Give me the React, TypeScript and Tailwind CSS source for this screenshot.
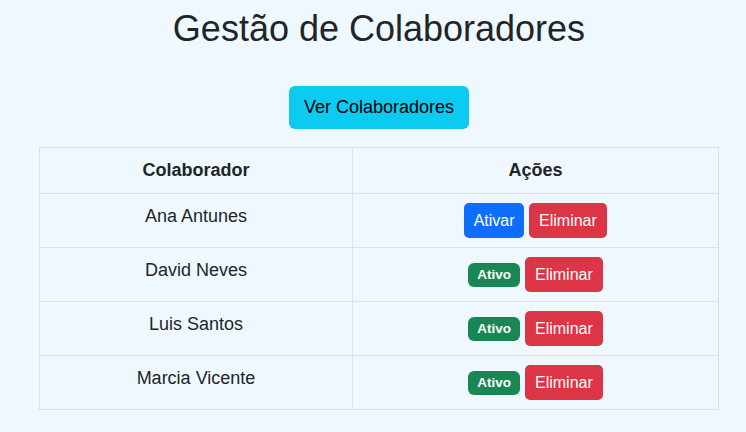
import { useState } from 'react';

interface Colaborador {
  id: number;
  nome: string;
  ativo: boolean;
}

const inicial: Colaborador[] = [
  { id: 1, nome: 'Ana Antunes', ativo: false },
  { id: 2, nome: 'David Neves', ativo: true },
  { id: 3, nome: 'Luis Santos', ativo: true },
  { id: 4, nome: 'Marcia Vicente', ativo: true },
];

export default function App() {
  const [colaboradores, setColaboradores] = useState(inicial);

  const ativar = (id: number) =>
    setColaboradores((lista) => lista.map((c) => (c.id === id ? { ...c, ativo: true } : c)));

  const eliminar = (id: number) =>
    setColaboradores((lista) => lista.filter((c) => c.id !== id));

  return (
    <div className="min-h-[432px] bg-[#f0f8ff] text-[#212529] font-['Liberation_Sans',Arial,sans-serif]">
      <div className="pl-[12px]">
        <h1 className="pt-[7px] text-center text-[36px] leading-[1.2]">Gestão de Colaboradores</h1>

        <div className="mt-[36px] flex justify-center">
          <button className="h-[43px] px-[14.5px] rounded-[6px] bg-[#0dcaf0] text-[18px] text-black">
            Ver Colaboradores
          </button>
        </div>
      </div>

      {/* Tabela */}
      <table className="mt-[18px] ml-[39px] w-[680px] border-collapse table-fixed text-[18px] leading-[27px]">
        <colgroup>
          <col className="w-[313px]" />
          <col />
        </colgroup>
        <thead>
          <tr>
            <th className="border border-[#dee2e6] p-[9px] font-bold">Colaborador</th>
            <th className="border border-[#dee2e6] p-[9px] font-bold">Ações</th>
          </tr>
        </thead>
        <tbody>
          {colaboradores.map((c) => (
            <tr key={c.id}>
              <td className="border border-[#dee2e6] p-[9px] text-center align-top">{c.nome}</td>
              <td className="border border-[#dee2e6] p-[9px] align-top">
                <div className="flex items-center justify-center gap-[5px]">
                  {c.ativo ? (
                    <span className="h-[24px] px-[9px] flex items-center rounded-[6px] bg-[#198754] text-white text-[13.5px] font-bold leading-none">
                      Ativo
                    </span>
                  ) : (
                    <button
                      onClick={() => ativar(c.id)}
                      className="h-[35px] px-[9.5px] rounded-[5px] bg-[#0d6efd] text-white text-[16px] leading-[24px]"
                    >
                      Ativar
                    </button>
                  )}
                  <button
                    onClick={() => eliminar(c.id)}
                    className="h-[35px] px-[10px] rounded-[5px] bg-[#dc3545] text-white text-[16px] leading-[24px]"
                  >
                    Eliminar
                  </button>
                </div>
              </td>
            </tr>
          ))}
        </tbody>
      </table>
    </div>
  );
}
